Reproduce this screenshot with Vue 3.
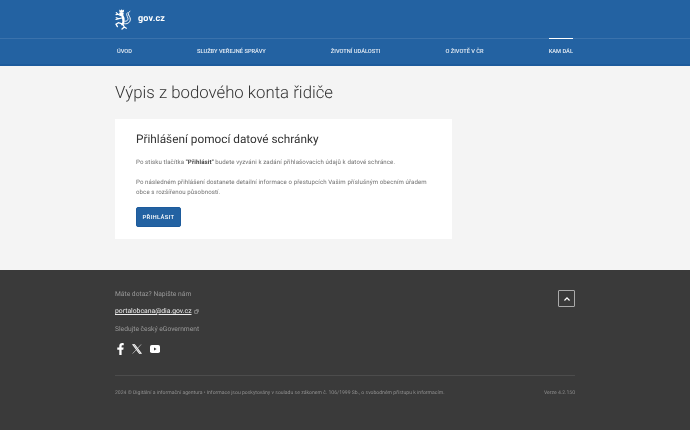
<template>
  <div class="page">
    <header class="header">
      <div class="brand wrap">
        <svg class="lion" viewBox="0 0 17 21">
          <!-- crown and head -->
          <path d="M4.500 3.200L4.200.6l1.400 1L6.700.2l1 1.400 1.400-1-.3 2.600z" fill="#fff"/>
          <ellipse cx="6.400" cy="4.800" rx="2.300" ry="1.700" fill="#fff"/>
          <g fill="none" stroke="#fff" stroke-linecap="round">
            <!-- body -->
            <path d="M7 6c1.300 2 1.700 4 1.500 6.500-.1 1.200-.5 2-1.200 2.800" stroke-width="2.300"/>
            <!-- front paws -->
            <path d="M5.500 6.500L3 5.200 1 5.600M1.300 3.600L3 5.200" stroke-width="1.200"/>
            <path d="M7 9L4 9.700 1.200 8.700M1 10.500L4 9.700" stroke-width="1.200"/>
            <!-- hind legs -->
            <path d="M7 14.800L3.500 13.600 1 15.200 2.400 17.600" stroke-width="1.300"/>
            <path d="M8 15.500l1.300 2.500-2.300 2M9.300 18l2 1.200" stroke-width="1.300"/>
            <!-- double tail -->
            <path d="M9.500 14.800c3.700.3 5.800-1.700 5.800-4.600 0-2.400-2.100-3.600-1.900-5.700.1-1 .7-1.700 1.500-2.200" stroke-width="1"/>
            <path d="M10 12.300c2 .2 3-1.100 3-2.700 0-1.500-1.300-2.400-1.300-4 0-.7.200-1.300.6-1.800" stroke-width=".9"/>
          </g>
        </svg>
        <span class="brand-name">gov.cz</span>
      </div>
      <nav class="nav">
        <div class="nav-row wrap">
          <a v-for="item in navItems" :key="item.label" class="nav-item" :class="{ active: item.active }">{{ item.label }}</a>
        </div>
      </nav>
    </header>

    <main class="main">
      <div class="wrap">
        <h1 class="title">Výpis z bodového konta řidiče</h1>
        <section class="card">
          <h2 class="card-title">Přihlášení pomocí datové schránky</h2>
          <p>Po stisku tlačítka <b>"Přihlásit"</b> budete vyzváni k zadání přihlašovacích údajů k datové schránce.</p>
          <p>Po následném přihlášení dostanete detailní informace o přestupcích Vašim příslušným obecním úřadem obce s rozšířenou působností.</p>
          <button class="btn">PŘIHLÁSIT</button>
        </section>
      </div>
    </main>

    <footer class="footer">
      <div class="wrap">
        <div class="foot-top">
          <div>
            <div class="foot-text">Máte dotaz? Napište nám</div>
            <div class="foot-mail">
              <a class="mail">portalobcana@dia.gov.cz</a>
              <svg class="ext" viewBox="0 0 8 8"><path d="M1 2.500h4.500V7H1zM3 1h4v4" fill="none" stroke="#aaa" stroke-width="1"/></svg>
            </div>
            <div class="foot-text">Sledujte český eGovernment</div>
            <div class="social">
              <svg class="soc fb" viewBox="0 0 7 13"><path d="M4.700 13V7.200h1.800l.4-2.300H4.700V3.500c0-.7.200-1.100 1.100-1.100H7V.2C6.700.1 6.100 0 5.300 0 3.500 0 2.200 1.100 2.200 3.200v1.700H0v2.300h2.200V13z" fill="#fff"/></svg>
              <svg class="soc tw" viewBox="0 0 11 11"><path d="M.5.500h2.600l7.400 10H7.900zM1.800 1.200l6.400 8.600h1L2.800 1.200zM10 .5L6.100 4.800M4.700 6.300L.7 10.500" fill="#fff" fill-rule="evenodd" stroke="#fff" stroke-width=".6"/></svg>
              <svg class="soc yt" viewBox="0 0 10 8"><rect width="10" height="8" rx="1.800" fill="#fff"/><path d="M4 2.500v3l2.600-1.500z" fill="#3a3a3a"/></svg>
            </div>
          </div>
          <button class="top-btn">
            <svg viewBox="0 0 6 4" width="6" height="4"><path d="M3 0l3 3-.9.900L3 1.800.9 3.900 0 3z" fill="#fff"/></svg>
          </button>
        </div>
        <div class="foot-bottom">
          <span>2024 © Digitální a informační agentura • Informace jsou poskytovány v souladu se zákonem č. 106/1999 Sb., o svobodném přístupu k informacím.</span>
          <span>Verze 4.2.150</span>
        </div>
      </div>
    </footer>
  </div>
</template>

<script setup>
const navItems = [
  { label: 'ÚVOD' },
  { label: 'SLUŽBY VEŘEJNÉ SPRÁVY' },
  { label: 'ŽIVOTNÍ UDÁLOSTI' },
  { label: 'O ŽIVOTĚ V ČR' },
  { label: 'KAM DÁL', active: true }
]
</script>

<style>
html, body {
  margin: 0;
  background: #f4f4f4;
}
</style>

<style scoped>
.page {
  font-family: Roboto, "Liberation Sans", sans-serif;
  text-rendering: geometricPrecision;
  width: 690px;
  height: 430px;
  overflow: hidden;
  filter: blur(0.25px);
}

.wrap {
  width: 460px;
  margin: 0 auto;
}

.header {
  background: #2362a2;
  border-bottom: 2px solid #1d5b9c;
}

.brand {
  height: 38px;
  display: flex;
  align-items: center;
  gap: 6px;
  box-sizing: border-box;
}

.lion {
  width: 17px;
  height: 21px;
}

.brand-name {
  color: #fff;
  font-size: 9px;
  font-weight: 700;
  letter-spacing: 0.2px;
}

.nav {
  border-top: 1px solid #3a72ac;
}

.nav-row {
  height: 25px;
  display: flex;
  justify-content: space-between;
  align-items: stretch;
  padding: 0 2px;
  box-sizing: border-box;
}

.nav-item {
  color: #e6edf5;
  font-size: 5.700px;
  font-weight: 500;
  display: flex;
  align-items: center;
  border-top: 1px solid transparent;
  margin-top: -1px;
}

.nav-item.active {
  border-top-color: #fff;
}

.main {
  height: 204px;
  background: #f4f4f4;
}

.title {
  margin: 0;
  padding-top: 16px;
  font-size: 16.800px;
  line-height: 22px;
  font-weight: 300;
  color: #333;
}

.card {
  margin-top: 15px;
  width: 337px;
  height: 120px;
  background: #fff;
  padding: 13px 21px 0;
  box-sizing: border-box;
}

.card-title {
  margin: 0 0 11px;
  font-size: 11.800px;
  line-height: 15px;
  font-weight: 400;
  color: #333;
}

.card p {
  margin: 0 0 10px;
  font-size: 6.100px;
  line-height: 10px;
  color: #6f6f6f;
  letter-spacing: 0.1px;
}

.card b {
  color: #444;
}

.btn {
  display: block;
  width: 45px;
  height: 20px;
  margin-top: -1px;
  padding: 0;
  background: #2362a2;
  border: 1px solid #1d5b9c;
  border-radius: 2px;
  color: #fff;
  font-family: inherit;
  font-size: 5.900px;
  font-weight: 500;
  letter-spacing: 0.3px;
}

.footer {
  height: 160px;
  background: #3a3a3a;
  padding-top: 19px;
  box-sizing: border-box;
}

.foot-top {
  display: flex;
  justify-content: space-between;
  align-items: flex-start;
  height: 86px;
}

.foot-text {
  font-size: 6.700px;
  line-height: 10px;
  color: #999;
  margin-bottom: 7px;
}

.foot-mail {
  display: flex;
  align-items: center;
  gap: 2px;
  height: 10px;
  margin-bottom: 8px;
}

.mail {
  color: #eee;
  font-size: 6.800px;
  text-decoration: underline;
}

.ext {
  width: 5px;
  height: 5px;
}

.social {
  display: flex;
  align-items: center;
  gap: 8px;
  padding: 2px 0 0 2px;
}

.soc {
  display: block;
}

.fb {
  width: 7px;
  height: 12px;
}

.tw {
  width: 10px;
  height: 10px;
}

.yt {
  width: 10px;
  height: 8px;
}

.top-btn {
  width: 17px;
  height: 17px;
  margin-top: 1px;
  background: transparent;
  border: 1px solid #aaa;
  border-radius: 1px;
  padding: 0;
  display: flex;
  align-items: center;
  justify-content: center;
}

.foot-bottom {
  border-top: 1px solid #4c4c4c;
  display: flex;
  justify-content: space-between;
  padding-top: 13px;
  font-size: 5.100px;
  line-height: 8px;
  color: #8f8f8f;
}
</style>
